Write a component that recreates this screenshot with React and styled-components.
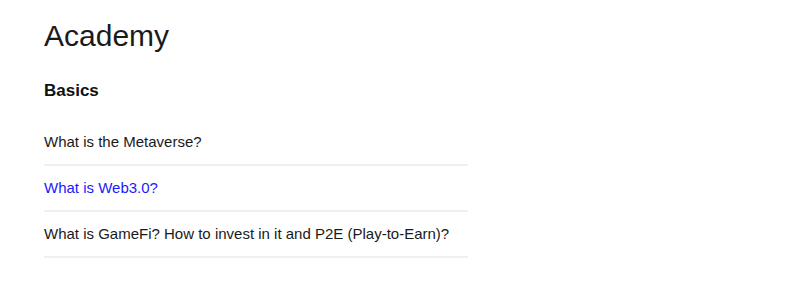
import React from "react";
import styled, { createGlobalStyle } from "styled-components";

const GlobalStyle = createGlobalStyle`
  body {
    margin: 0;
    background: #fff;
    font-family: "Liberation Sans", Arial, sans-serif;
  }
`;

const Page = styled.div`
  padding: 19px 44px;
`;

const Title = styled.h1`
  margin: 0;
  font-size: 30px;
  font-weight: 400;
  color: #1a1a1a;
`;

const Section = styled.section`
  margin-top: 28px;
  width: 424px;
`;

const SectionTitle = styled.h2`
  margin: 0;
  font-size: 17px;
  font-weight: 700;
  color: #111;
`;

const List = styled.ul`
  list-style: none;
  margin: 19px 0 0;
  padding: 0;
`;

const Item = styled.li`
  padding: 13px 0 14px;
  border-bottom: 2px solid #f0f0f0;
  font-size: 15px;

  a {
    color: ${(p) => (p.$active ? "#1a1aff" : "#1a1a1a")};
    text-decoration: none;
  }
`;

const articles = [
  { title: "What is the Metaverse?" },
  { title: "What is Web3.0?", active: true },
  { title: "What is GameFi? How to invest in it and P2E (Play-to-Earn)?" },
];

export default function App() {
  return (
    <>
      <GlobalStyle />
      <Page>
        <Title>Academy</Title>
        <Section>
          <SectionTitle>Basics</SectionTitle>
          <List>
            {articles.map((a) => (
              <Item key={a.title} $active={a.active}>
                <a href="#">{a.title}</a>
              </Item>
            ))}
          </List>
        </Section>
      </Page>
    </>
  );
}
